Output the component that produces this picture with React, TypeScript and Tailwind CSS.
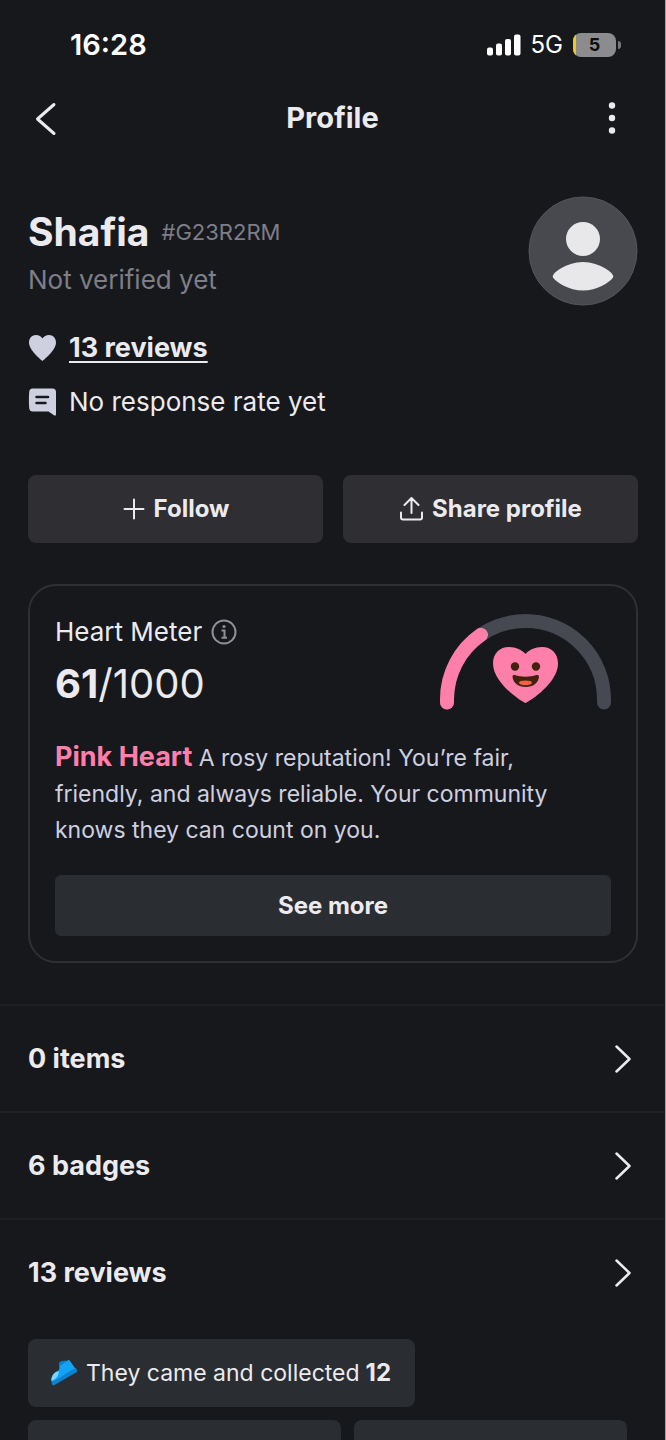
import type { ReactNode } from "react";
import clsx from "clsx";

const SECTIONS = ["0 items", "6 badges", "13 reviews"];

function StatusBar() {
  return (
    <div className="flex h-[90px] items-center justify-between pl-[70px] pr-[44px] text-white">
      <span className="text-[29px] leading-9 font-semibold">16:28</span>
      <div className="flex items-center">
        <svg width="34" height="22" viewBox="0 0 34 22" fill="currentColor" aria-hidden="true">
          <rect x="0" y="13.500" width="6" height="8" rx="2" />
          <rect x="9" y="9.500" width="6" height="12" rx="2" />
          <rect x="18" y="5" width="6" height="16.500" rx="2" />
          <rect x="27" y="0.500" width="6.500" height="21" rx="2" />
        </svg>
        <span className="ml-2.5 text-2xl leading-9">5G</span>
        <div className="relative ml-2.5 flex h-6 w-[43px] items-center justify-center overflow-hidden rounded-lg bg-[#8c8c8e] text-lg leading-6 font-bold text-[#0b0b0c]">
          <span className="absolute inset-y-0 left-0 w-[3px] bg-[#f0c91c]" />
          5
        </div>
        <span className="ml-0.5 h-2 w-[3px] rounded-r-full bg-[#77787b]" />
      </div>
    </div>
  );
}

function Header() {
  return (
    <header className="grid h-14 grid-cols-[1fr_auto_1fr] items-center px-[26px]">
      <button type="button" aria-label="Back" className="flex size-10 items-center justify-center">
        <svg width="24" height="36" viewBox="0 0 24 36" fill="none" stroke="currentColor" strokeWidth="3" strokeLinecap="round" strokeLinejoin="round">
          <path d="M20 4.500 3.500 19 20 33.500" />
        </svg>
      </button>
      <h1 className="text-[29px] leading-9 font-bold">Profile</h1>
      <button type="button" aria-label="More" className="flex h-10 w-[54px] items-center justify-center justify-self-end">
        <svg width="8" height="32" viewBox="0 0 8 32" fill="currentColor">
          <circle cx="4" cy="3.500" r="3.200" />
          <circle cx="4" cy="16" r="3.200" />
          <circle cx="4" cy="28.500" r="3.200" />
        </svg>
      </button>
    </header>
  );
}

function Avatar() {
  return (
    <svg width="110" height="110" viewBox="0 0 110 110" className="shrink-0" role="img" aria-label="Avatar">
      <circle cx="55" cy="55" r="54" fill="#48494e" stroke="#54555a" />
      <circle cx="55" cy="43" r="17" fill="#e8e8ea" />
      <path d="M25 81.500C22.500 78 38 66 55 66s32.500 12 30 15.500C81 87 69 94.500 55 94.500S29 87 25 81.500z" fill="#e8e8ea" />
    </svg>
  );
}

function ProfileInfo() {
  return (
    <section className="flex items-start justify-between pt-[50px]">
      <div className="pt-3">
        <div className="flex h-12 items-center gap-3">
          <h2 className="text-[39px] leading-[48px] font-bold">Shafia</h2>
          <span className="text-[22px] leading-8 text-[#7d7e87]">#G23R2RM</span>
        </div>
        <p className="mt-1.5 text-[26px] leading-9 text-[#7d7e87]">Not verified yet</p>
        <div className="mt-8 flex items-center gap-3">
          <svg width="29" height="28" viewBox="0 0 29 28" fill="#ced0e0" aria-hidden="true">
            <path d="M14.500 27C12 25 1 16 1 8.500 1 4 4 1 8 1c3 0 5 1.300 6.500 3.500C16 2.300 18 1 21 1c4 0 7 3 7 7.500C28 16 17 25 14.500 27z" />
          </svg>
          <a href="#reviews" className="text-[27px] leading-9 font-bold underline decoration-2 underline-offset-4">
            13 reviews
          </a>
        </div>
        <div className="mt-[18px] flex items-center gap-3">
          <svg width="29" height="28" viewBox="0 0 29 28" aria-hidden="true">
            <path d="M4.500 0.500h20a3.500 3.500 0 0 1 3.500 3.500v22.500c0 1-1 1.500-2 .8L20.500 23.500H5C2.500 23.500 1.500 22.500 1.200 20 .8 15 .8 9 1.200 4 1.400 1.800 2.500.500 4.500.500z" fill="#ced0e0" />
            <path d="M8.500 9h11.500M8.500 15h9" stroke="#17181c" strokeWidth="2.500" strokeLinecap="round" />
          </svg>
          <span className="text-[26px] leading-9">No response rate yet</span>
        </div>
      </div>
      <Avatar />
    </section>
  );
}

function ActionButton({ icon, children }: { icon: ReactNode; children: ReactNode }) {
  return (
    <button type="button" className="flex h-[68px] items-center justify-center gap-2 rounded-lg bg-[#2f2e33] text-2xl font-bold">
      {icon}
      {children}
    </button>
  );
}

function Gauge() {
  return (
    <svg width="171" height="96" viewBox="0 0 171 96" className="shrink-0" role="img" aria-label="Pink heart level">
      <g fill="none" strokeWidth="14" strokeLinecap="round">
        <path d="M7 88.500v-3a78.500 78.500 0 0 1 157 0v3" stroke="#464852" />
        <path d="M7 88.500v-3A78.500 78.500 0 0 1 41 20.800" stroke="#ff7fab" />
      </g>
      <path d="M85.500 89C81 87 53 69 53 49.500 53 39 60 33 69 33c7 0 13 3 16.500 7C89 36 95 33 102 33c9 0 16 6 16 16.500C118 69 90 87 85.500 89z" fill="#ff7fab" />
      <circle cx="75" cy="52.500" r="4.200" fill="#43210f" />
      <circle cx="96" cy="52.500" r="4.200" fill="#43210f" />
      <path d="M72.500 62.500c0-1.200 1-1.800 2-1.500 7 2.200 15 2.200 22 0 1.500-.3 2.500.3 2.500 1.500-.5 6.500-6 10.500-13.200 10.500S73 69 72.500 62.500z" fill="#43210f" />
      <ellipse cx="85.500" cy="68.800" rx="6.500" ry="2.400" fill="#ff5f4a" />
    </svg>
  );
}

function HeartMeter() {
  return (
    <section className="mt-[41px] rounded-[28px] border-2 border-[#2f3034] px-[25px] pt-7 pb-[25px]">
      <div className="flex items-start justify-between">
        <div>
          <div className="flex items-center gap-[9px]">
            <h3 className="text-[26px] leading-9">Heart Meter</h3>
            <button type="button" aria-label="About Heart Meter" className="text-[#8e8f99]">
              <svg width="26" height="26" viewBox="0 0 26 26" fill="none" stroke="currentColor" strokeWidth="2">
                <circle cx="13" cy="13" r="11.500" />
                <path d="M10.500 11.500H13.500V18.500M10.500 18.800h5.500" />
                <circle cx="13" cy="7.500" r="1.600" fill="currentColor" stroke="none" />
              </svg>
            </button>
          </div>
          <p className="mt-2.5 text-[40px] leading-[48px]">
            <strong className="font-bold">61</strong>/1000
          </p>
        </div>
        <Gauge />
      </div>
      <p className="mt-[30px] pr-8 text-[23px] leading-9 text-[#ced0e0]">
        <strong className="text-[27px] leading-none font-bold text-[#ff7fab]">Pink Heart</strong> A rosy reputation! You’re fair, friendly, and always reliable. Your community knows they can count on you.
      </p>
      <button type="button" className="mt-[27px] h-[61px] w-full rounded-md bg-[#2a2d31] text-2xl font-bold">
        See more
      </button>
    </section>
  );
}

function SectionRow({ label }: { label: string }) {
  return (
    <a href="#section" className="flex h-[107px] items-center justify-between border-t-2 border-[#1f2024] pr-[33px] pl-7">
      <span className="text-[27px] leading-9 font-bold">{label}</span>
      <svg width="17" height="28" viewBox="0 0 17 28" fill="none" stroke="currentColor" strokeWidth="2.500" strokeLinecap="round" strokeLinejoin="round" aria-hidden="true">
        <path d="M1.500 1.500 14.500 14l-13 12.500" />
      </svg>
    </a>
  );
}

function ShoeIcon() {
  return (
    <svg width="28" height="28" viewBox="0 0 28 28" aria-hidden="true">
      <path d="M9 9V4.500C9 3 10.500 2 12 2l4-.5 1 4z" fill="#0a7fca" />
      <path d="M1.500 22C1 18 3 14 8 12c1.500-1.500 1.500-3 2-5l7.500-5.500c1-.7 1.800-.5 2.500.5l6 8.500L3 24z" fill="#12a2f8" />
      <path d="M1.500 22.500c8-2 15-9.500 24.500-13.500l1.200 2.500c.3.800 0 1.300-.7 1.700L4.500 26c-2 1-3-.5-3-3.500z" fill="#0b82cf" />
      <path d="M1.500 22C1 17.500 3.500 13.500 8.500 12c1 4-2.500 8.500-7 10z" fill="#7fd4ff" />
    </svg>
  );
}

function Chip({ className, children }: { className?: string; children?: ReactNode }) {
  return (
    <li className={clsx("flex h-[68px] items-center rounded-lg bg-[#2a2d31]", className)}>
      {children}
    </li>
  );
}

export default function App() {
  return (
    <div className="h-screen overflow-hidden border-r border-[#a5a6a9] bg-[#17181c] font-['Inter','Liberation_Sans',sans-serif] text-[#ebebef]">
      <StatusBar />
      <Header />
      <main>
        <div className="pr-[27px] pl-7">
          <ProfileInfo />
          <div className="mt-[55px] grid grid-cols-2 gap-5">
            <ActionButton
              icon={
                <svg width="24" height="24" viewBox="0 0 24 24" fill="none" stroke="currentColor" strokeWidth="2" strokeLinecap="round">
                  <path d="M12 2.500v19M2.500 12h19" />
                </svg>
              }
            >
              Follow
            </ActionButton>
            <ActionButton
              icon={
                <svg width="25" height="26" viewBox="0 0 25 26" fill="none" stroke="currentColor" strokeWidth="2" strokeLinecap="round" strokeLinejoin="round">
                  <path d="M12.500 17V2.500M5.500 9l7-7 7 7M2 16.500V21.500a2 2 0 0 0 2 2h17a2 2 0 0 0 2-2v-5" />
                </svg>
              }
            >
              Share profile
            </ActionButton>
          </div>
          <HeartMeter />
        </div>
        <nav className="mt-[41px]">
          {SECTIONS.map((label) => (
            <SectionRow key={label} label={label} />
          ))}
        </nav>
        <ul className="flex flex-wrap gap-[13px] px-7 pt-[14px]">
          <Chip className="gap-2 pr-6 pl-[22px] text-[23px] leading-9">
            <ShoeIcon />
            <span className="flex items-center gap-1.5">
              They came and collected <strong className="text-2xl font-bold">12</strong>
            </span>
          </Chip>
          <li className="w-full">
            <ul className="flex gap-[13px]">
              <Chip className="w-[313px]" />
              <Chip className="w-[273px]" />
            </ul>
          </li>
        </ul>
      </main>
    </div>
  );
}
